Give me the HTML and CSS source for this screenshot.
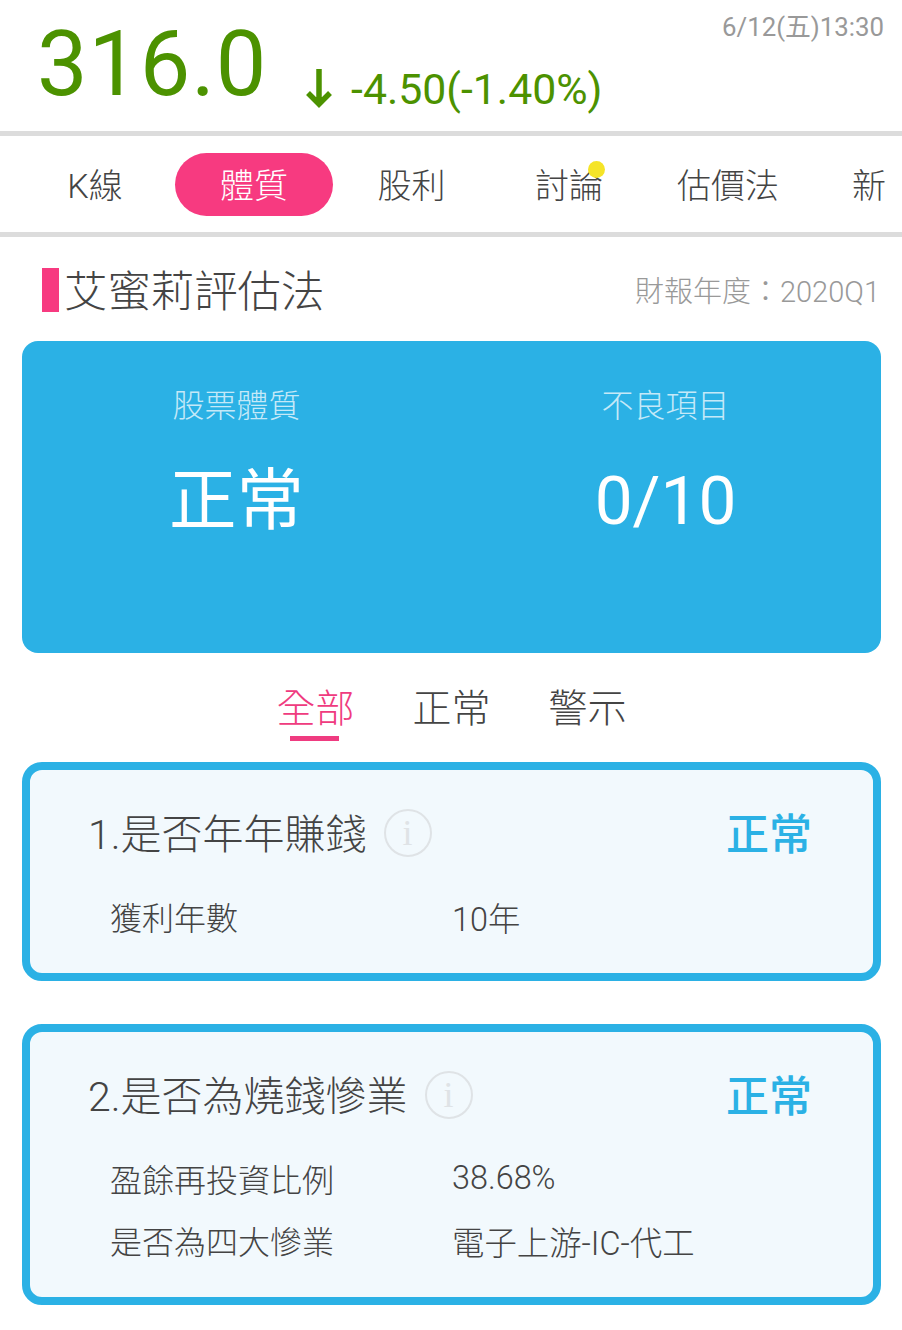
FILE: index.html
```html
<!DOCTYPE html>
<html lang="zh-TW">
<head>
    <meta charset="UTF-8">
    <meta name="viewport" content="width=device-width, initial-scale=1.0">
    <title>艾蜜莉評估法</title>
    <link rel="stylesheet" href="styles.css">
</head>
<body>
    <header class="quote">
        <div class="price">316.0</div>
        <svg class="arrow" width="30" height="42" viewBox="0 0 30 42">
            <path d="M15 2V38M4 26L15 37L26 26" fill="none" stroke="#4c9200" stroke-width="5.5"/>
        </svg>
        <div class="change">-4.50(-1.40%)</div>
        <div class="time">6/12(五)13:30</div>
    </header>

    <nav class="tabs">
        <a class="tab tab-k">K線</a>
        <a class="tab tab-active">體質</a>
        <a class="tab tab-div">股利</a>
        <a class="tab tab-talk">討論<span class="dot"></span></a>
        <a class="tab tab-val">估價法</a>
        <a class="tab tab-new">新</a>
    </nav>

    <section class="title-row">
        <h1 class="title">艾蜜莉評估法</h1>
        <div class="season">財報年度：2020Q1</div>
    </section>

    <section class="summary">
        <div class="summary-col">
            <div class="summary-label">股票體質</div>
            <div class="summary-value">正常</div>
        </div>
        <div class="summary-col">
            <div class="summary-label">不良項目</div>
            <div class="summary-value">0/10</div>
        </div>
    </section>

    <div class="filters">
        <a class="filter filter-active">全部</a>
        <a class="filter">正常</a>
        <a class="filter">警示</a>
    </div>

    <article class="card card-one">
        <div class="card-head">
            <h2 class="card-title">1.是否年年賺錢</h2>
            <span class="info">i</span>
            <span class="card-status">正常</span>
        </div>
        <div class="card-row"><span class="row-label">獲利年數</span><span class="row-value">10年</span></div>
    </article>

    <article class="card card-two">
        <div class="card-head">
            <h2 class="card-title">2.是否為燒錢慘業</h2>
            <span class="info">i</span>
            <span class="card-status">正常</span>
        </div>
        <div class="card-row"><span class="row-label">盈餘再投資比例</span><span class="row-value">38.68%</span></div>
        <div class="card-row"><span class="row-label">是否為四大慘業</span><span class="row-value">電子上游-IC-代工</span></div>
    </article>
</body>
</html>
```

FILE: styles.css
```css
html, body {
    height: 1330px;
    overflow: hidden;
}
body {
    font-family: Roboto, "Noto Sans CJK TC", sans-serif;
    font-weight: 300;
    background-color: white;
    color: #444;
    margin: 0;
    padding: 0;
}
.quote {
    height: 131px;
    display: flex;
    padding: 0 18px 0 37px;
    border-bottom: 5px solid #dcdcdc;
}
.price {
    font-size: 90px;
    font-weight: 400;
    line-height: 106px;
    margin-top: 12px;
    letter-spacing: 0.8px;
    color: #4c9200;
}
.arrow {
    margin: 67px 0 0 37px;
}
.change {
    font-size: 42.8px;
    font-weight: 400;
    line-height: 50px;
    margin: 64px 0 0 17px;
    color: #4c9200;
}
.time {
    font-size: 25.8px;
    font-weight: 400;
    margin-left: auto;
    line-height: 30px;
    margin-top: 12px;
    color: #999;
}
.tabs {
    height: 96px;
    display: flex;
    align-items: center;
    overflow: hidden;
    border-bottom: 5px solid #dcdcdc;
    font-size: 34px;
}
.tab {
    flex: none;
    text-align: center;
    line-height: 67px;
    height: 63px;
    white-space: nowrap;
}
.tab-k { width: 175px; padding-left: 15px; box-sizing: border-box; }
.tab-active {
    width: 158px;
    border-radius: 32px;
    background-color: #f73a80;
    color: white;
}
.tab-div { width: 157px; }
.tab-talk { width: 158px; position: relative; }
.tab-val { width: 160px; }
.tab-new { width: 122px; }
.dot {
    position: absolute;
    top: 8px;
    left: 98px;
    width: 17px;
    height: 17px;
    border-radius: 50%;
    background-color: #f5e428;
}
.title-row {
    height: 104px;
    display: flex;
    align-items: center;
    justify-content: space-between;
    padding: 0 22px 0 42px;
}
.title {
    margin: 2px 0 0;
    height: 44px;
    font-size: 43.4px;
    font-weight: 300;
    line-height: 49px;
    border-left: 17px solid #f73a80;
    padding-left: 5px;
}
.season {
    font-size: 29px;
    color: #999;
}
.summary {
    height: 312px;
    margin: 0 21px 0 22px;
    display: flex;
    background-color: #2bb1e5;
    border-radius: 16px;
    color: white;
    text-align: center;
}
.summary-col {
    width: 429px;
    padding-top: 43px;
}
.summary-label {
    font-size: 32px;
    line-height: 44px;
    color: #c5e9f8;
}
.summary-value {
    font-size: 67.5px;
    line-height: 80px;
    margin-top: 33px;
    font-weight: 400;
}
.filters {
    height: 109px;
    display: flex;
    justify-content: center;
    gap: 58px;
    padding-left: 1px;
    box-sizing: border-box;
    font-size: 39px;
}
.filter {
    height: 88px;
    line-height: 112px;
    position: relative;
}
.filter-active {
    color: #ef3b80;
}
.filter-active::after {
    content: "";
    position: absolute;
    left: 14px;
    right: 15px;
    bottom: 0;
    height: 5px;
    background-color: #ef3b80;
}
.card {
    margin: 0 21px 43px 22px;
    box-sizing: border-box;
    border: 8px solid #2bb1e5;
    border-radius: 20px;
    background-color: #f2f9fd;
    padding: 0 61px 0 58px;
}
.card-one { height: 219px; }
.card-two { height: 281px; }
.card-head {
    display: flex;
    align-items: center;
    height: 48px;
    margin-top: 37px;
    margin-bottom: 30px;
}
.card-title {
    margin: 0;
    font-size: 41px;
    font-weight: 300;
    white-space: nowrap;
}
.info {
    width: 44px;
    height: 44px;
    margin: 3px 0 0 17px;
    border: 2px solid #dfe3e6;
    border-radius: 50%;
    font-family: "Liberation Serif", serif;
    font-size: 36px;
    line-height: 44px;
    text-align: center;
    color: #dfe3e6;
}
.card-status {
    margin-left: auto;
    font-size: 43px;
    font-weight: 500;
    color: #2bb1e5;
}
.card-row {
    display: flex;
    height: 62px;
    align-items: center;
    padding-left: 22px;
    font-size: 32px;
}
.row-label {
    width: 342px;
    flex: none;
}
.row-value {
    font-size: 32.4px;
}
```
